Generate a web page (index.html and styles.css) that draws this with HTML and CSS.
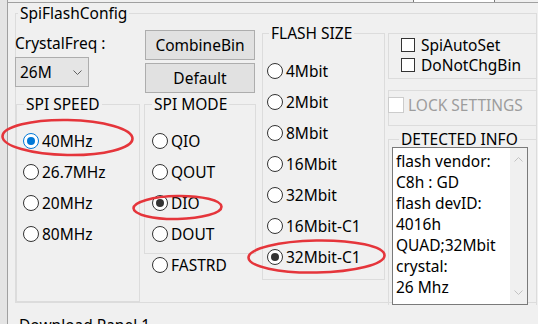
FILE: index.html
```html
<!DOCTYPE html>
<html>
<head>
<meta charset="utf-8">
<link rel="stylesheet" href="styles.css">
</head>
<body>
<div class="shell">
  <div class="edge"></div>
  <div class="client">
    <div class="topstrip"><div class="ts-gap"></div><div class="ts-box"></div><div class="ts-rest"></div></div>
    <fieldset class="grp outer">
      <legend>SpiFlashConfig</legend>
      <div class="cols">
        <div class="col col-a">
          <div class="crystal">CrystalFreq :</div>
          <div class="combo"><span>26M</span><svg class="chev" width="9" height="5" viewBox="0 0 9 5"><path d="M0.5 0.5 L4.5 4.5 L8.5 0.5" fill="none" stroke="#606060" stroke-width="1"/></svg></div>
          <fieldset class="grp speed">
            <legend>SPI SPEED</legend>
            <div class="radios">
              <div class="radio"><span class="dot on focus"></span>40MHz</div>
              <div class="radio"><span class="dot"></span>26.7MHz</div>
              <div class="radio"><span class="dot"></span>20MHz</div>
              <div class="radio"><span class="dot"></span>80MHz</div>
            </div>
          </fieldset>
        </div>
        <div class="col col-b">
          <div class="btn first">CombineBin</div>
          <div class="btn second">Default</div>
          <fieldset class="grp mode">
            <legend>SPI MODE</legend>
            <div class="radios">
              <div class="radio"><span class="dot"></span>QIO</div>
              <div class="radio"><span class="dot"></span>QOUT</div>
              <div class="radio"><span class="dot on"></span>DIO</div>
              <div class="radio"><span class="dot"></span>DOUT</div>
            </div>
          </fieldset>
          <div class="radio solo"><span class="dot"></span>FASTRD</div>
        </div>
        <div class="col col-c">
          <fieldset class="grp flash">
            <legend>FLASH SIZE</legend>
            <div class="radios">
              <div class="radio"><span class="dot"></span>4Mbit</div>
              <div class="radio"><span class="dot"></span>2Mbit</div>
              <div class="radio"><span class="dot"></span>8Mbit</div>
              <div class="radio"><span class="dot"></span>16Mbit</div>
              <div class="radio"><span class="dot"></span>32Mbit</div>
              <div class="radio"><span class="dot"></span>16Mbit-C1</div>
              <div class="radio"><span class="dot on"></span>32Mbit-C1</div>
            </div>
          </fieldset>
        </div>
        <div class="col col-d">
          <div class="box checks">
            <div class="check"><span class="cb"></span>SpiAutoSet</div>
            <div class="check"><span class="cb"></span>DoNotChgBin</div>
          </div>
          <div class="box lock">
            <div class="check"><span class="cb off"></span><span class="dis">LOCK SETTINGS</span></div>
          </div>
          <fieldset class="grp info">
            <legend>DETECTED INFO</legend>
            <div class="textbox">
              <div class="tb-text">flash vendor:<br>C8h : GD<br>flash devID:<br>4016h<br>QUAD;32Mbit<br>crystal:<br>26 Mhz</div>
              <div class="sbar">
                <svg width="9" height="5" viewBox="0 0 9 5"><path d="M0.5 4.5 L4.5 0.5 L8.5 4.5" fill="none" stroke="#c2c2c2" stroke-width="1"/></svg>
                <svg width="9" height="5" viewBox="0 0 9 5"><path d="M0.5 0.5 L4.5 4.5 L8.5 0.5" fill="none" stroke="#c2c2c2" stroke-width="1"/></svg>
              </div>
            </div>
          </fieldset>
        </div>
      </div>
    </fieldset>
    <div class="next">Download Panel 1</div>
  </div>
  <svg class="marks" width="538" height="324" viewBox="0 0 538 324">
    <ellipse cx="67.5" cy="137.5" rx="65" ry="17.5" transform="rotate(1 67.5 137.5)"/>
    <ellipse cx="177.5" cy="207.5" rx="44" ry="11.5" transform="rotate(-1 177.5 207.5)"/>
    <ellipse cx="316.5" cy="256.5" rx="68" ry="16" transform="rotate(-1 316.5 256.5)"/>
  </svg>
</div>
</body>
</html>
```

FILE: styles.css
```css
* { box-sizing: border-box; }
html, body {
  margin: 0;
  height: 324px;
  overflow: hidden;
  background: #f0f0f0;
}
body {
  font-family: "Noto Sans", "Open Sans", sans-serif;
  font-size: 15.5px;
  line-height: 20px;
  color: #000;
}
.shell {
  display: flex;
  height: 324px;
  position: relative;
}
.edge {
  flex: none;
  width: 8px;
  background: #e4e4e4;
  border-right: 1px solid #a0a0a0;
}
.client {
  flex: 1;
  min-width: 0;
}
.topstrip {
  height: 3px;
  display: flex;
  border-bottom: 1px solid #a0a0a0;
}
.ts-gap { width: 405px; }
.ts-box {
  width: 82px;
  background: #fff;
  border-left: 1px solid #7a7a7a;
  border-right: 1px solid #7a7a7a;
}
.ts-rest { flex: 1; }

.grp {
  margin: 0;
  padding: 0;
  border: 1px solid #dcdcdc;
  min-width: 0;
}
.grp > legend {
  padding: 0 2px;
  line-height: 20px;
}
.outer {
  margin-left: 7px;
  width: 522px;
  height: 300px;
}
.outer > legend { margin-left: 2px; }
.cols {
  display: flex;
  align-items: flex-start;
}
.col {
  flex: none;
  display: flex;
  flex-direction: column;
  align-items: flex-start;
}
.col-a { width: 125px; margin-left: -1px; }
.col-b { width: 112px; margin-left: 4px; }
.col-c { width: 123px; margin-left: 6px; }
.col-d { width: 149px; margin-left: 3px; }

.crystal { margin-top: 10px; white-space: nowrap; }
.combo {
  margin-top: 4px;
  width: 74px;
  height: 30px;
  border: 1px solid #adadad;
  background: #e5e5e5;
  display: flex;
  align-items: center;
  justify-content: space-between;
  padding: 0 6px 0 4px;
}
.chev { display: block; }

.speed {
  margin-top: 7px;
  margin-left: 1px;
  width: 124px;
  height: 208px;
}
.speed > legend { margin-left: 7px; }
.speed .radios { padding: 11px 0 0 6px; }

.radio {
  display: flex;
  align-items: center;
  height: 31px;
  white-space: nowrap;
}
.dot {
  flex: none;
  width: 16px;
  height: 16px;
  border: 1px solid #333;
  border-radius: 50%;
  background: #fff;
  margin-right: 3px;
  display: flex;
  align-items: center;
  justify-content: center;
}
.dot.on::after {
  content: "";
  width: 8px;
  height: 8px;
  border-radius: 50%;
  background: #333;
}
.dot.focus { border-color: #0078d7; }
.dot.focus::after { background: #0078d7; }

.btn {
  width: 110px;
  height: 30px;
  margin-left: 1px;
  border: 1px solid #adadad;
  background: #e1e1e1;
  display: flex;
  align-items: center;
  justify-content: center;
}
.btn.first { margin-top: 7px; }
.btn.second { margin-top: 3px; }
.mode {
  margin-top: 1px;
  width: 112px;
  height: 160px;
}
.mode > legend { margin-left: 7px; }
.mode .radios { padding: 11px 0 0 7px; }
.radio.solo {
  margin-top: 1px;
  height: 20px;
  padding-left: 8px;
}

.flash {
  width: 123px;
  height: 257px;
}
.flash > legend { margin-left: 6px; }
.flash .radios { padding: 12px 0 0 4px; }

.box {
  width: 149px;
  border: 1px solid #dcdcdc;
}
.checks {
  margin-top: 10px;
  height: 46px;
  padding: 1px 0 0 12px;
}
.check {
  display: flex;
  align-items: center;
  height: 20px;
  white-space: nowrap;
}
.cb {
  flex: none;
  width: 14px;
  height: 14px;
  border: 1px solid #333;
  background: #fff;
  margin-right: 6px;
}
.lock {
  margin-top: 11px;
  height: 36px;
  padding-top: 4px;
}
.cb.off {
  width: 16px;
  height: 16px;
  border-color: #cccccc;
  margin-left: -1px;
  margin-right: 4px;
}
.dis { color: #9d9d9d; }

.info {
  margin-top: 5px;
  width: 149px;
  border-bottom: none;
}
.info > legend {
  margin-left: 10px;
  line-height: 16px;
}
.textbox {
  margin-left: 3px;
  width: 136px;
  height: 158px;
  border: 1px solid #7a7a7a;
  background: #fff;
  display: flex;
}
.tb-text {
  flex: 1;
  padding: 3px 0 0 3px;
  line-height: 21px;
  white-space: nowrap;
}
.sbar {
  flex: none;
  width: 17px;
  background: #f0f0f0;
  display: flex;
  flex-direction: column;
  justify-content: space-between;
  align-items: center;
  padding: 9px 0 9px;
}
.sbar svg { display: block; }

.next {
  margin: 12px 0 0 11px;
  white-space: nowrap;
}

.marks {
  position: absolute;
  left: 0;
  top: 0;
  pointer-events: none;
}
.marks ellipse {
  fill: none;
  stroke: #e5353b;
  stroke-width: 2.6;
}
```
